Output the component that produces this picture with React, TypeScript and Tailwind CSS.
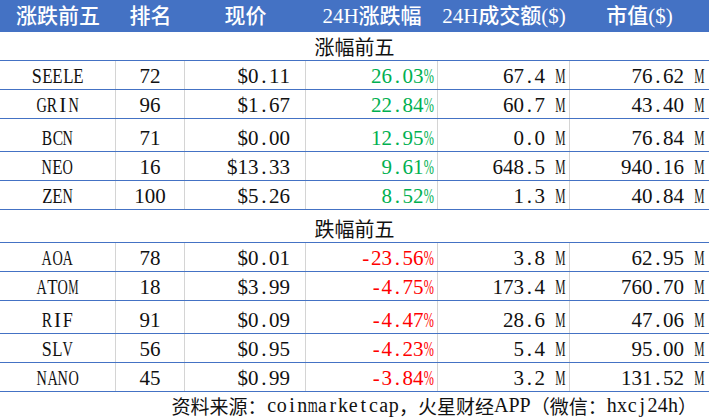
const up = [
  { name: "SEELE", rank: "72", price: "$0.11", chg: "26.03%", vol: "67.4 M", cap: "76.62 M", h: "h-[29px]" },
  { name: "GRIN", rank: "96", price: "$1.67", chg: "22.84%", vol: "60.7 M", cap: "43.40 M", h: "h-[29px]" },
  { name: "BCN", rank: "71", price: "$0.00", chg: "12.95%", vol: "0.0 M", cap: "76.84 M", h: "h-[33px]" },
  { name: "NEO", rank: "16", price: "$13.33", chg: "9.61%", vol: "648.5 M", cap: "940.16 M", h: "h-[29px]" },
  { name: "ZEN", rank: "100", price: "$5.26", chg: "8.52%", vol: "1.3 M", cap: "40.84 M", h: "h-[29px]" },
];

const down = [
  { name: "AOA", rank: "78", price: "$0.01", chg: "-23.56%", vol: "3.8 M", cap: "62.95 M", h: "h-[29px]" },
  { name: "ATOM", rank: "18", price: "$3.99", chg: "-4.75%", vol: "173.4 M", cap: "760.70 M", h: "h-[29px]" },
  { name: "RIF", rank: "91", price: "$0.09", chg: "-4.47%", vol: "28.6 M", cap: "47.06 M", h: "h-[33px]" },
  { name: "SLV", rank: "56", price: "$0.95", chg: "-4.23%", vol: "5.4 M", cap: "95.00 M", h: "h-[29px]" },
  { name: "NANO", rank: "45", price: "$0.99", chg: "-3.84%", vol: "3.2 M", cap: "131.52 M", h: "h-[29px]" },
];

const grid = "grid grid-cols-[116px_69px_121px_132px_132px_139px]";
const serif = "font-['Liberation_Serif',serif] text-[21px] leading-none";
const cjk = "font-['Noto_Sans_CJK_SC',sans-serif]";

// squeeze wide serif glyphs into half-width cells (spreadsheet SimSun look)
const squeeze: Record<string, string> = {
  M: "scale-x-[0.55]",
  m: "scale-x-[0.64]",
  "%": "scale-x-[0.58]",
  A: "scale-x-[0.68]",
  G: "scale-x-[0.68]",
  N: "scale-x-[0.68]",
  O: "scale-x-[0.68]",
  V: "scale-x-[0.68]",
  B: "scale-x-[0.74]",
  C: "scale-x-[0.74]",
  R: "scale-x-[0.74]",
  E: "scale-x-[0.8]",
  L: "scale-x-[0.8]",
  T: "scale-x-[0.8]",
  Z: "scale-x-[0.8]",
  S: "scale-x-[0.86]",
  F: "scale-x-[0.86]",
};

const Mono = ({ text, cell = "w-[10.5px]" }: { text: string; cell?: string }) => (
  <span className="inline-flex">
    {text.split("").map((c, i) => (
      <span key={i} className={`inline-flex justify-center ${cell}`}>
        {squeeze[c] ? (
          <span className={`inline-block ${squeeze[c]}`}>{c}</span>
        ) : c === " " ? (
          "\u00a0"
        ) : (
          c
        )}
      </span>
    ))}
  </span>
);

type Row = (typeof up)[number];

const DataRow = ({ r, color }: { r: Row; color: string }) => {
  const cell = "flex items-end pb-[2px] border-r border-[#d4d4d4] whitespace-nowrap";
  return (
    <div className={`${grid} ${r.h} border-b border-[#4472c4] text-[#111] ${serif}`}>
      <div className={`${cell} justify-center`}><Mono text={r.name} /></div>
      <div className={`${cell} justify-center`}><Mono text={r.rank} /></div>
      <div className={`${cell} justify-end pr-[15px]`}><Mono text={r.price} /></div>
      <div className={`${cell} justify-end pr-[3px] ${color}`}><Mono text={r.chg} /></div>
      <div className={`${cell} justify-end pr-[3px]`}><Mono text={r.vol} /></div>
      <div className="flex items-end justify-end pb-[2px] pr-[4px] whitespace-nowrap"><Mono text={r.cap} /></div>
    </div>
  );
};

const Section = ({ label, h }: { label: string; h: string }) => (
  <div className={`${h} flex items-end justify-center pb-[3px] border-b border-[#4472c4] ${cjk} text-[20px] leading-none text-[#111]`}>
    {label}
  </div>
);

export default function App() {
  const head = "flex items-center justify-center whitespace-nowrap";
  return (
    <div className="w-[709px] h-[418px] bg-white overflow-hidden">
      <div className={`${grid} h-[32px] bg-[#4472c4] text-white font-['Liberation_Serif','Noto_Sans_CJK_SC',serif] text-[21px] font-medium leading-none`}>
        <div className={head}>涨跌前五</div>
        <div className={head}>排名</div>
        <div className={head}>现价</div>
        <div className={head}>24H涨跌幅</div>
        <div className={head}>24H成交额($)</div>
        <div className={head}>市值($)</div>
      </div>
      <Section label="涨幅前五" h="h-[29px]" />
      {up.map((r) => (
        <DataRow key={r.name} r={r} color="text-[#00b050]" />
      ))}
      <Section label="跌幅前五" h="h-[33px]" />
      {down.map((r) => (
        <DataRow key={r.name} r={r} color="text-[#ff0000]" />
      ))}
      <div className="h-[26px] flex items-center justify-end pr-[12px] text-[19px] leading-none text-[#111] whitespace-nowrap">
        <span className={cjk}>资料来源：</span>
        <span className="font-['Liberation_Serif',serif] text-[20px]"><Mono text="coinmarketcap" cell="w-[10.2px]" /></span>
        <span className={cjk}>，火星财经</span>
        <span className="font-['Liberation_Serif',serif] text-[20px]">APP</span>
        <span className={cjk}>（微信：</span>
        <span className="font-['Liberation_Serif',serif] text-[20px]"><Mono text="hxcj24h" cell="w-[10.2px]" /></span>
        <span className={cjk}>）</span>
      </div>
    </div>
  );
}
